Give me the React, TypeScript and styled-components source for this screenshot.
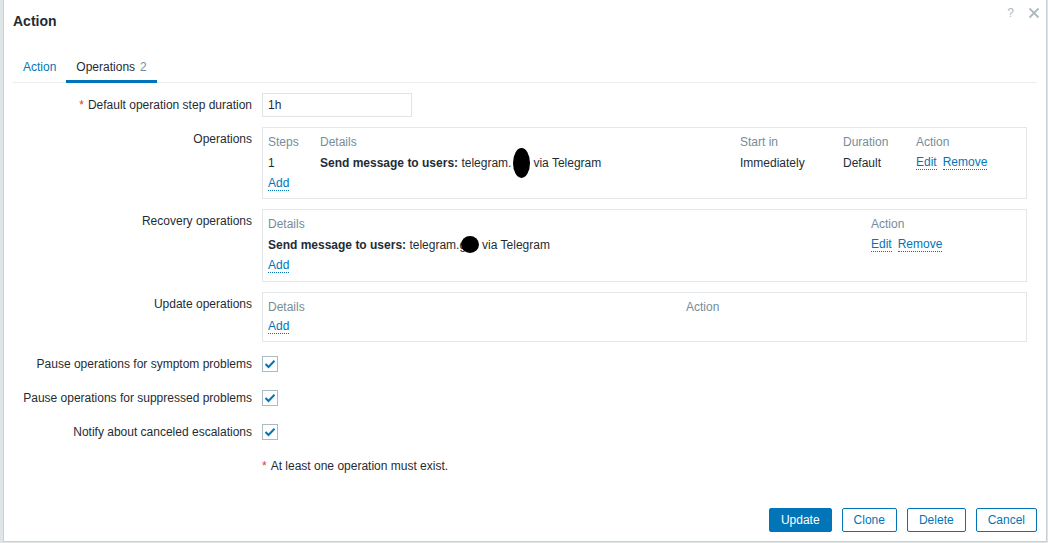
import React from "react";
import styled, { createGlobalStyle } from "styled-components";

const Global = createGlobalStyle`
  html, body { margin: 0; padding: 0; }
  body {
    height: 543px;
    overflow: hidden;
    background: #dfe4e7;
    font-family: "Liberation Sans", Arial, sans-serif;
    font-size: 12px;
    color: #1f2c33;
  }
  * { box-sizing: border-box; }
`;

const Dialog = styled.div`
  position: relative;
  margin-left: 3px;
  width: 1044px;
  height: 542px;
  background: #fff;
  border: 1px solid #c9d1d6;
  border-top: none;
  padding: 0 9px 9px;
  display: flex;
  flex-direction: column;
`;

const Header = styled.div`
  height: 42px;
  display: flex;
  align-items: center;
`;

const Title = styled.h4`
  margin: 0;
  font-size: 14px;
  font-weight: bold;
  color: #1f2c33;
  line-height: 16px;
`;

const HeadControls = styled.div`
  position: absolute;
  top: 5px;
  right: 6px;
  display: flex;
  gap: 14px;
  align-items: center;
  color: #acbbc2;
`;

const HelpMark = styled.span`
  font-size: 12px;
  line-height: 16px;
`;

const TabList = styled.div`
  margin-top: 10px;
  display: flex;
  border-bottom: 1px solid #ebeef0;
`;

const Tab = styled.div<{ $active?: boolean }>`
  padding: 8px 10px 6px;
  line-height: 14px;
  margin-bottom: -1px;
  border-bottom: 3px solid ${(p) => (p.$active ? "#0275b8" : "transparent")};
  color: ${(p) => (p.$active ? "#1f2c33" : "#0275b8")};
`;

const TabCount = styled.span`
  color: #768d99;
  margin-left: 5px;
`;

const Form = styled.div`
  margin-top: 10px;
  padding-right: 10px;
  display: grid;
  grid-template-columns: 239px 1fr;
  column-gap: 10px;
  row-gap: 10px;
`;

const Label = styled.div`
  text-align: right;
  line-height: 24px;
  align-self: start;
`;

const Req = styled.span`
  color: #e33734;
  margin-right: 4px;
`;

const Field = styled.div`
  min-height: 24px;
  display: flex;
  align-items: center;
`;

const TextInput = styled.input`
  width: 150px;
  height: 24px;
  border: 1px solid #dfe4e7;
  padding: 0 5px;
  font: inherit;
  color: #1f2c33;
  outline: none;
`;

const Box = styled.div`
  width: 100%;
  border: 1px solid #e3e7ea;
  padding: 3px 5px 4px;
`;

const TableRow = styled.div<{ $cols: string; $h?: number }>`
  display: grid;
  grid-template-columns: ${(p) => p.$cols};
  height: ${(p) => p.$h ?? 21}px;
  align-items: center;
  white-space: nowrap;
`;

const Th = styled.div`
  color: #768d99;
`;

const Cell = styled.div`
  display: flex;
  align-items: center;
  gap: 6px;
`;

const Strong = styled.b`
  font-weight: bold;
`;

const Link = styled.a`
  color: #0275b8;
  text-decoration: none;
  border-bottom: 1px dotted #0275b8;
  line-height: 13px;
  cursor: pointer;
`;

const Redact = styled.span<{ $w: number; $h: number; $ml?: number }>`
  display: inline-block;
  width: ${(p) => p.$w}px;
  height: ${(p) => p.$h}px;
  margin: ${(p) => -(p.$h - 14) / 2}px 3px ${(p) => -(p.$h - 14) / 2}px ${(p) => p.$ml ?? 2}px;
  background: #000;
  border-radius: 50%;
  vertical-align: middle;
`;

const Detail = styled.span`
  display: inline-flex;
  align-items: center;
  white-space: nowrap;
`;

const CheckBox = styled.span`
  width: 16px;
  height: 16px;
  border: 1px solid #acbbc2;
  background: #fff;
  display: inline-flex;
  align-items: center;
  justify-content: center;
`;

const Message = styled.div`
  line-height: 24px;
`;

const Footer = styled.div`
  margin-top: auto;
  display: flex;
  justify-content: flex-end;
  gap: 10px;
`;

const Button = styled.button<{ $primary?: boolean }>`
  height: 24px;
  padding: 0 11px;
  font: inherit;
  border-radius: 2px;
  border: 1px solid #0275b8;
  background: ${(p) => (p.$primary ? "#0275b8" : "#fff")};
  color: ${(p) => (p.$primary ? "#fff" : "#0275b8")};
  cursor: pointer;
`;

const Check = () => (
  <CheckBox>
    <svg width="12" height="10" viewBox="0 0 12 10">
      <polyline points="1.5,5 4.5,8 10.5,1.8" fill="none" stroke="#0275b8" strokeWidth="2" />
    </svg>
  </CheckBox>
);

const opsCols = "52px 420px 103px 73px 1fr";
const recCols = "603px 1fr";
const updCols = "418px 1fr";

export default function App() {
  return (
    <>
      <Global />
      <Dialog>
        <Header>
          <Title>Action</Title>
        </Header>
        <HeadControls>
          <HelpMark>?</HelpMark>
          <svg width="12" height="12" viewBox="0 0 12 12">
            <path d="M1.5 1.5 L10.5 10.5 M10.5 1.5 L1.5 10.5" stroke="#acbbc2" strokeWidth="1.8" />
          </svg>
        </HeadControls>
        <TabList>
          <Tab>Action</Tab>
          <Tab $active>
            Operations<TabCount>2</TabCount>
          </Tab>
        </TabList>
        <Form>
          <Label>
            <Req>*</Req>Default operation step duration
          </Label>
          <Field>
            <TextInput defaultValue="1h" />
          </Field>

          <Label>Operations</Label>
          <Field>
            <Box>
              <TableRow $cols={opsCols}>
                <Th>Steps</Th>
                <Th>Details</Th>
                <Th>Start in</Th>
                <Th>Duration</Th>
                <Th>Action</Th>
              </TableRow>
              <TableRow $cols={opsCols}>
                <div>1</div>
                <Detail>
                  <Strong>Send message to users:</Strong>&nbsp;telegram.
                  <Redact $w={17} $h={30} />
                  via Telegram
                </Detail>
                <div>Immediately</div>
                <div>Default</div>
                <Cell>
                  <Link>Edit</Link>
                  <Link>Remove</Link>
                </Cell>
              </TableRow>
              <TableRow $cols={opsCols} $h={21}>
                <Cell>
                  <Link>Add</Link>
                </Cell>
              </TableRow>
            </Box>
          </Field>

          <Label>Recovery operations</Label>
          <Field>
            <Box>
              <TableRow $cols={recCols}>
                <Th>Details</Th>
                <Th>Action</Th>
              </TableRow>
              <TableRow $cols={recCols} $h={21}>
                <Detail>
                  <Strong>Send message to users:</Strong>&nbsp;telegram.g
                  <Redact $w={18} $h={17} $ml={-5} />
                  via Telegram
                </Detail>
                <Cell>
                  <Link>Edit</Link>
                  <Link>Remove</Link>
                </Cell>
              </TableRow>
              <TableRow $cols={recCols} $h={22}>
                <Cell>
                  <Link>Add</Link>
                </Cell>
              </TableRow>
            </Box>
          </Field>

          <Label>Update operations</Label>
          <Field>
            <Box>
              <TableRow $cols={updCols}>
                <Th>Details</Th>
                <Th>Action</Th>
              </TableRow>
              <TableRow $cols={updCols} $h={20}>
                <Cell>
                  <Link>Add</Link>
                </Cell>
              </TableRow>
            </Box>
          </Field>

          <Label>Pause operations for symptom problems</Label>
          <Field>
            <Check />
          </Field>

          <Label>Pause operations for suppressed problems</Label>
          <Field>
            <Check />
          </Field>

          <Label>Notify about canceled escalations</Label>
          <Field>
            <Check />
          </Field>

          <div />
          <Message>
            <Req>*</Req>At least one operation must exist.
          </Message>
        </Form>
        <Footer>
          <Button $primary>Update</Button>
          <Button>Clone</Button>
          <Button>Delete</Button>
          <Button>Cancel</Button>
        </Footer>
      </Dialog>
    </>
  );
}
